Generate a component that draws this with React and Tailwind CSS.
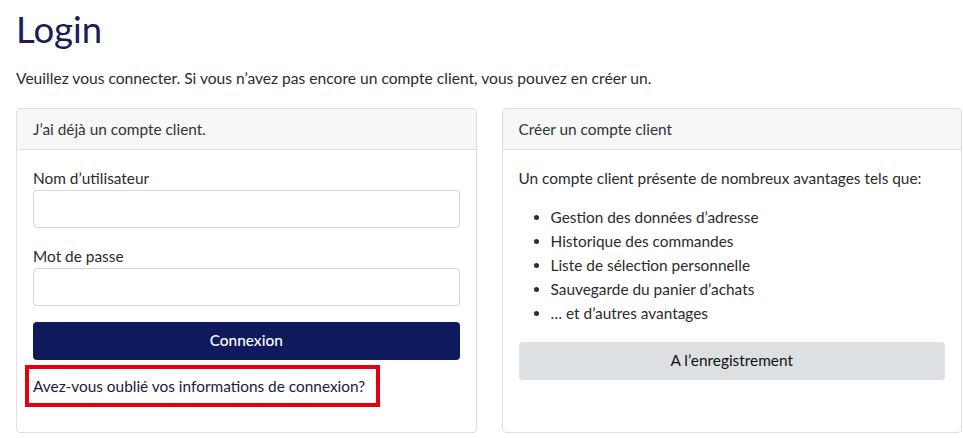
import React from 'react';

const perks = [
  'Gestion des données d’adresse',
  'Historique des commandes',
  'Liste de sélection personnelle',
  'Sauvegarde du panier d’achats',
  '… et d’autres avantages',
];

const Card = ({ title, children }) => (
  <div className="flex flex-col flex-1 border border-[#dfdfdf] rounded-[4px] bg-white">
    <div className="px-4 py-2 leading-6 bg-[#f7f7f7] border-b border-[#dfdfdf] rounded-t-[4px] text-[#333]">
      {title}
    </div>
    <div className="flex-1 p-4">{children}</div>
  </div>
);

export default function App() {
  return (
    <div
      className="w-[963px] h-[438px] bg-white pl-4 pr-[1px] text-[15.4px] text-[#2b2b2b] overflow-hidden"
      style={{ fontFamily: 'Lato, "Open Sans", sans-serif' }}
    >
      <h1 className="pt-[6px] text-[36.5px] leading-[46px] text-[#1b1c58]">Login</h1>

      <p className="mt-[14px] leading-6 text-[15.6px]">
        Veuillez vous connecter. Si vous n’avez pas encore un compte client, vous pouvez en créer un.
      </p>

      <div className="flex gap-[25px] mt-[18px]">
        {/* Login form */}
        <Card title="J’ai déjà un compte client.">
          <form onSubmit={(e) => e.preventDefault()}>
            <label className="block leading-6">Nom d’utilisateur</label>
            <input className="block w-full h-[38px] border border-[#d4d4d4] rounded-[4px] px-3" />

            <label className="block leading-6 mt-4">Mot de passe</label>
            <input type="password" className="block w-full h-[38px] border border-[#d4d4d4] rounded-[4px] px-3" />

            <button className="block w-full h-[38px] mt-4 rounded-[4px] bg-[#0f1a5c] text-white font-medium">
              Connexion
            </button>

            <div className="relative mt-[14px] mb-[18px] leading-6">
              <a href="#" className="text-[#1a1a3a]">Avez-vous oublié vos informations de connexion?</a>
              {/* red highlight box */}
              <div className="absolute left-[-8px] top-[-9px] w-[355px] h-[42px] border-4 border-[#e3000f] pointer-events-none" />
            </div>
          </form>
        </Card>

        {/* Register */}
        <Card title="Créer un compte client">
          <p className="leading-6">Un compte client présente de nombreux avantages tels que:</p>
          <ul className="list-disc pl-8 mt-[15px] leading-6">
            {perks.map((p) => (
              <li key={p}>{p}</li>
            ))}
          </ul>
          <button className="block w-full h-[38px] mt-[17px] rounded-[4px] bg-[#dde0e3] text-[#111]">
            A l’enregistrement
          </button>
        </Card>
      </div>
    </div>
  );
}
